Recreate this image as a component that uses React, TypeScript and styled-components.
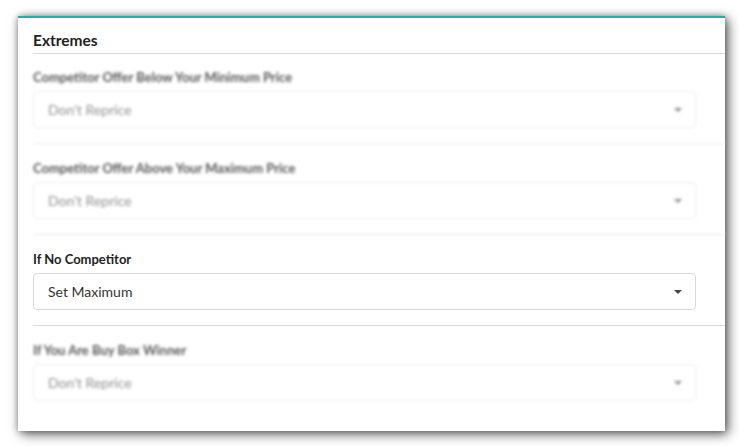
import React from "react";
import styled, { createGlobalStyle } from "styled-components";

const Global = createGlobalStyle`
  html, body { margin: 0; padding: 0; background: #ffffff; }
  body { font-family: Lato, "Open Sans", "Liberation Sans", sans-serif; }
`;

const Page = styled.div`
  padding: 16px 14px 15px 18px;
`;

const Card = styled.div`
  width: 707px;
  height: 415px;
  box-sizing: border-box;
  background: #fff;
  border-top: 2px solid #1fb0a5;
  box-shadow: 3px 3px 11px rgba(0, 0, 0, 0.65), 0 0 6px rgba(0, 0, 0, 0.28);
  padding-left: 15px;
  display: flex;
  flex-direction: column;
`;

const Header = styled.div`
  height: 36px;
  flex-shrink: 0;
  box-sizing: border-box;
  display: flex;
  align-items: center;
  padding-top: 8px;
  border-bottom: 1px solid #dcdcdc;
  font-size: 15.5px;
  font-weight: 700;
  color: #222;
`;

const Section = styled.div<{ $muted?: boolean; $last?: boolean; $first?: boolean }>`
  padding: ${(p) => (p.$first ? "14px" : "15px")} 29px ${(p) => (p.$last ? "30px" : "15px")} 0;
  border-bottom: ${(p) => (p.$last ? "none" : "1px solid #dcdcdc")};
  display: flex;
  flex-direction: column;
  gap: 5px;
  flex-shrink: 0;
  ${(p) =>
    p.$muted &&
    `
    filter: blur(1.6px);
    border-bottom-color: #e6e6e6;
  `}
`;

const Label = styled.div<{ $muted?: boolean }>`
  font-size: 13px;
  font-weight: 700;
  line-height: 18px;
  color: ${(p) => (p.$muted ? "#555" : "#222")};
`;

const Select = styled.div<{ $muted?: boolean }>`
  height: 37px;
  box-sizing: border-box;
  border: 1px solid ${(p) => (p.$muted ? "#ebebeb" : "#d9d9d9")};
  border-radius: 4px;
  display: flex;
  align-items: center;
  justify-content: space-between;
  padding: 0 13px 0 14px;
  font-size: 14px;
  color: ${(p) => (p.$muted ? "#8f8f8f" : "#333")};
`;

const Caret = styled.span<{ $muted?: boolean }>`
  width: 0;
  height: 0;
  border-left: 4px solid transparent;
  border-right: 4px solid transparent;
  border-top: 4px solid ${(p) => (p.$muted ? "#888" : "#444")};
`;

const rows = [
  { label: "Competitor Offer Below Your Minimum Price", value: "Don't Reprice", muted: true },
  { label: "Competitor Offer Above Your Maximum Price", value: "Don't Reprice", muted: true },
  { label: "If No Competitor", value: "Set Maximum", muted: false },
  { label: "If You Are Buy Box Winner", value: "Don't Reprice", muted: true },
];

export default function App() {
  return (
    <>
      <Global />
      <Page>
        <Card>
          <Header>Extremes</Header>
          {rows.map((r, i) => (
            <Section
              key={r.label}
              $muted={r.muted}
              $first={i === 0}
              $last={i === rows.length - 1}
            >
              <Label $muted={r.muted}>{r.label}</Label>
              <Select $muted={r.muted}>
                <span>{r.value}</span>
                <Caret $muted={r.muted} />
              </Select>
            </Section>
          ))}
        </Card>
      </Page>
    </>
  );
}
